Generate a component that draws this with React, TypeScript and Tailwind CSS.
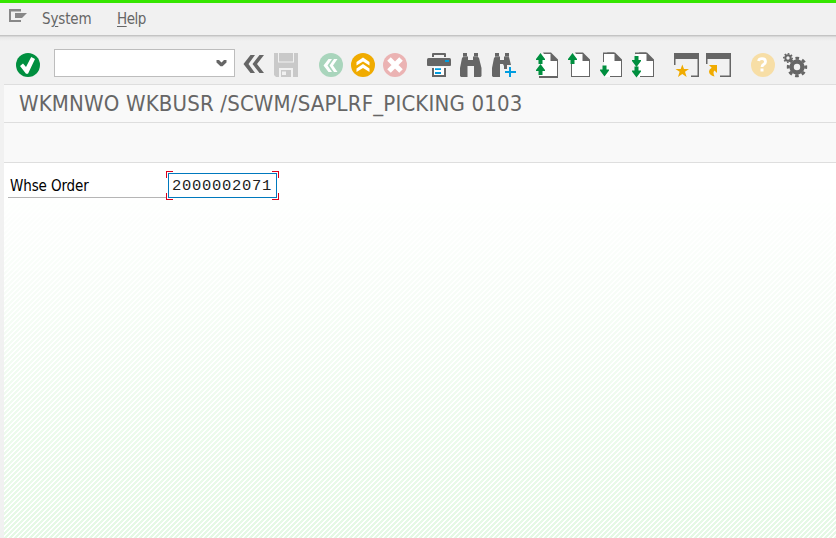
import type { ReactNode } from "react";

const GRAY = "#666666";
const GREEN = "#008f3f";
const BLUE = "#009de0";
const AMBER = "#f0ab00";

function Icon({ className = "", label, children }: { className?: string; label: string; children: ReactNode }) {
  return (
    <button aria-label={label} className={`h-6 w-6 shrink-0 ${className}`}>
      <svg viewBox="0 0 24 24" className="block h-6 w-6 overflow-visible">{children}</svg>
    </button>
  );
}

function Page({ children }: { children: ReactNode }) {
  return (
    <>
      <path d="M5 1H17L23 7V24H5Z" fill="#fff" />
      <path d="M8 -.5H16L23 6.5V8H15.5V1H9Z" fill={GRAY} />
      <path d="M22 7h1v17h-1z" fill={GRAY} />
      {children}
    </>
  );
}

const UP = "M5.5 0L10 6V7H7.5V11H3.5V7H1V6Z";
const DOWN = "M5.5 11L10 5V4H7.5V0H3.5V4H1V5Z";

function Toolbar() {
  return (
    <div className="flex h-[48px] items-start pl-4 pt-[16px]">
      <Icon label="Enter">
        <circle cx="12" cy="12" r="12" fill={GREEN} />
        <path d="M4 13L7 10.5L10 14L15.2 4L19 6L12 20.7H10Z" fill="#fff" />
      </Icon>
      <div className="-mt-[4px] ml-[14px] flex h-7 w-[181px] shrink-0 items-center justify-end border border-[#bdbdbd] bg-white pr-[7px]">
        <svg viewBox="0 0 11 7" className="h-[7px] w-[11px]">
          <path d="M.5 0H3L5.5 2.5L8 0H10.5V2.5L6.5 6.3H4.5L.5 2.5Z" fill={GRAY} />
        </svg>
      </div>
      <Icon label="Collapse" className="ml-[8px]">
        <path d="M7.5 2H12L5.5 11L12 20H7.5L.5 11ZM16.5 2H21L14 11L21 20H16.5L9.5 11Z" fill={GRAY} />
      </Icon>
      <Icon label="Save" className="ml-[7px]">
        <path d="M0 0H4V9.5H20V0H24V24H2L0 22Z" fill="#c9c9c9" />
        <path d="M5 0H19V8.5H5Z" fill="#c9c9c9" />
        <path d="M5 15H19V24H5Z" fill="#f1f1f1" />
        <path d="M7 17H17V24H7Z" fill="#c9c9c9" />
        <path d="M8 18.5H12V22H8Z" fill="#f1f1f1" />
      </Icon>
      <Icon label="Back" className="ml-[21px]">
        <circle cx="12" cy="12" r="12" fill="#a9d5bc" />
        <path d="M9.5 6H13L8.5 12.5L13 19H9.5L4.5 12.5ZM15 6H18.5L14 12.5L18.5 19H15L10.5 12.5Z" fill="#fff" />
      </Icon>
      <Icon label="Exit" className="ml-[8px]">
        <circle cx="12" cy="12" r="12" fill={AMBER} />
        <path d="M12 4.5L18.5 9V12.5L12 8.5L5.5 12.5V9ZM12 11L18.5 15.5V19L12 15L5.5 19V15.5Z" fill="#fff" />
      </Icon>
      <Icon label="Cancel" className="ml-[8px]">
        <circle cx="12" cy="12" r="12" fill="#ebb3b3" />
        <path d="M6 6L18 18M18 6L6 18" stroke="#fff" strokeWidth="5" />
      </Icon>
      <Icon label="Print" className="ml-[20px]">
        <path d="M5 4V1Q5 0 6 0H18Q19 0 19 1V4H17V2H7V4Z" fill={GRAY} />
        <path d="M1.5 5H22.5Q24 5 24 6.5V12Q24 13 23 13H1Q0 13 0 12V6.5Q0 5 1.5 5Z" fill={GRAY} />
        <path d="M18 7H22V9H18Z" fill={BLUE} />
        <path d="M5 15H19V24H5Z" fill={GRAY} />
        <path d="M7 14H17V22H7Z" fill="#fff" />
        <path d="M8 15.2H14V17H8ZM8 19H14V21H8Z" fill={BLUE} />
      </Icon>
      <Icon label="Find" className="ml-[8px]">
        <path d="M4 0H8V3L9 4V7H14V4L15 3V0H19V4L20 5L22.5 15V23L21.5 24H15V13H8.5V24H2L1 23V15L3 5L4 4Z" fill={GRAY} />
        <path d="M4 3.7H8M15 3.7H19" stroke="#b5b5b5" strokeWidth=".6" />
      </Icon>
      <Icon label="Find next" className="ml-[8px]">
        <path d="M4 0H8V3L9 4V7H13V4L14 3V0H18V4L20 12H16V16H13V13L12 11H9V24H2L1 23V15L3 5L4 4Z" fill={GRAY} />
        <path d="M4 3.7H8M14 3.7H18" stroke="#b5b5b5" strokeWidth=".6" />
        <path d="M18 14H20V18H25V20H20V24H18V20H14V18H18Z" fill={BLUE} />
      </Icon>
      <Icon label="First page" className="ml-[20px]">
        <Page>
          <path d="M4 23H23V25H4Z" fill={GRAY} />
          <path d={UP} fill={GREEN} />
          <path d={UP} transform="translate(0 11)" fill={GREEN} />
        </Page>
      </Icon>
      <Icon label="Previous page" className="ml-[8px]">
        <Page>
          <path d="M4 11H5V23H23V24H4Z" fill={GRAY} />
          <path d={UP} fill={GREEN} />
        </Page>
      </Icon>
      <Icon label="Next page" className="ml-[8px]">
        <Page>
          <path d="M4 -.5H15V1H5V9H4ZM11 23H23V24H11Z" fill={GRAY} />
          <path d={DOWN} transform="translate(0 12.5)" fill={GREEN} />
        </Page>
      </Icon>
      <Icon label="Last page" className="ml-[8px]">
        <Page>
          <path d="M4 -.5H15V1H4ZM9 23H23V24H9Z" fill={GRAY} />
          <path d={DOWN} transform="translate(0 3)" fill={GREEN} />
          <path d={DOWN} transform="translate(0 13.5)" fill={GREEN} />
        </Page>
      </Icon>
      <Icon label="New session" className="ml-[19px]">
        <path d="M0 0H25V24H17V22.5H23.5V6H1.5V12H0Z" fill={GRAY} />
        <path d="M8.3 11.5L10 16H15L11 18.8L12.6 24L8.3 21L4 24L5.6 18.8L1.5 16H6.7Z" fill={AMBER} />
      </Icon>
      <Icon label="Create shortcut" className="ml-[8px]">
        <path d="M0 0H25V24H14V22.5H23.5V6H1.5V11H0Z" fill={GRAY} />
        <path d="M3 12H11V20L8.5 17.5Q6.5 19 8.5 23.5Q3 22 3 18.5Q3 16.5 5.7 14.7Z" fill={AMBER} />
      </Icon>
      <Icon label="Help" className="ml-[21px]">
        <circle cx="12" cy="12" r="12" fill="#f7dea6" />
        <path d="M7.5 8Q8 5.7 11 5.7Q14.5 5.7 14.5 8.7Q14.5 10.2 12.8 11.2Q11 12.3 11 14" fill="none" stroke="#fff" strokeWidth="2.8" />
        <path d="M9.5 15.5H12.5V18.5H9.5Z" fill="#fff" />
      </Icon>
      <Icon label="Customize" className="ml-[8px]">
        <circle cx="14" cy="14" r="5.4" fill="none" stroke={GRAY} strokeWidth="4.4" />
        <circle cx="14" cy="14" r="8.7" fill="none" stroke={GRAY} strokeWidth="3" strokeDasharray="3.6 3.233" strokeDashoffset="1.8" />
        <circle cx="5" cy="5" r="2.7" fill="none" stroke={GRAY} strokeWidth="2" />
        <circle cx="5" cy="5" r="4.2" fill="none" stroke={GRAY} strokeWidth="1.6" strokeDasharray="1.65 1.65" strokeDashoffset=".8" />
      </Icon>
    </div>
  );
}

export default function App() {
  return (
    <div className="flex h-[538px] w-[836px] flex-col overflow-hidden bg-[#f1f1f1] font-['DejaVu_Sans_Condensed','DejaVu_Sans',sans-serif] [font-stretch:condensed]">
      <div className="h-[3px] shrink-0 bg-[#36e600]" />
      <nav className="flex h-8 shrink-0 items-start pl-[9px] text-[15px] leading-[18px] text-[#666]">
        <svg viewBox="0 0 18 13" className="mt-[6px] h-[13px] w-[18px]">
          <path d="M0 0H12V2.5H2V11H12V13H0Z" fill="#888" />
          <path d="M6 4H18L13 9H6Z" fill="#888" />
        </svg>
        <span className="ml-[15px] mt-[7px] w-[75px] tracking-[-0.15px]">S<span className="underline underline-offset-2">y</span>stem</span>
        <span className="mt-[7px] tracking-[-0.5px]"><span className="underline underline-offset-2">H</span>elp</span>
      </nav>
      <div className="h-[2px] shrink-0 border-t border-[#c4c4c4] bg-[#d8d8d8]" />
      <div className="flex h-[47px] shrink-0 flex-col bg-gradient-to-b from-[#e7e7e7] to-[#f1f1f1] to-[4px]">
        <Toolbar />
      </div>
      <main className="ml-1 flex flex-1 flex-col border-t border-[#dedede] bg-white">
        <h1 className="h-[38px] shrink-0 whitespace-nowrap border-b border-[#dedede] bg-[#f9f9f9] pl-[15px] pt-[5px] text-[22px] font-normal leading-[28px] tracking-[0.16px] text-[#666]">
          WKMNWO WKBUSR /SCWM/SAPLRF_PICKING 0103
        </h1>
        <div className="h-10 shrink-0 border-b border-[#dedede] bg-[#f9f9f9]" />
        <section className="relative flex-1 bg-white">
          <div className="absolute inset-0 bg-[linear-gradient(135deg,#e5f9e5_30%,#ffffff_30%,#ffffff_50%,#e5f9e5_50%,#e5f9e5_80%,#ffffff_80%)] bg-[length:5px_5px] [mask-image:linear-gradient(to_bottom,transparent_20px,black_100%)]" />
          <div className="relative flex items-start pl-1 pt-[8px]">
            <label className="mt-[2px] h-[25px] w-[158px] border-b border-[#b5b5b5] pl-[2px] pt-[2px] text-[15px] leading-[22px] tracking-[-0.12px] text-black">Whse Order</label>
            <div className="relative h-[29px] w-[113px] p-[2px]">
              <div className="h-[25px] w-[109px] border border-[#0079be] bg-white pl-[3px] font-['Liberation_Mono',monospace] text-[15.5px] leading-[24px] tracking-[0.7px] text-[#222]">2000002071</div>
              <span className="absolute left-0 top-0 h-[7px] w-[7px] border-l border-t border-[#d9001b]" />
              <span className="absolute right-0 top-0 h-[7px] w-[7px] border-r border-t border-[#d9001b]" />
              <span className="absolute bottom-0 left-0 h-[7px] w-[7px] border-b border-l border-[#d9001b]" />
              <span className="absolute bottom-0 right-0 h-[7px] w-[7px] border-b border-r border-[#d9001b]" />
            </div>
          </div>
        </section>
      </main>
    </div>
  );
}
